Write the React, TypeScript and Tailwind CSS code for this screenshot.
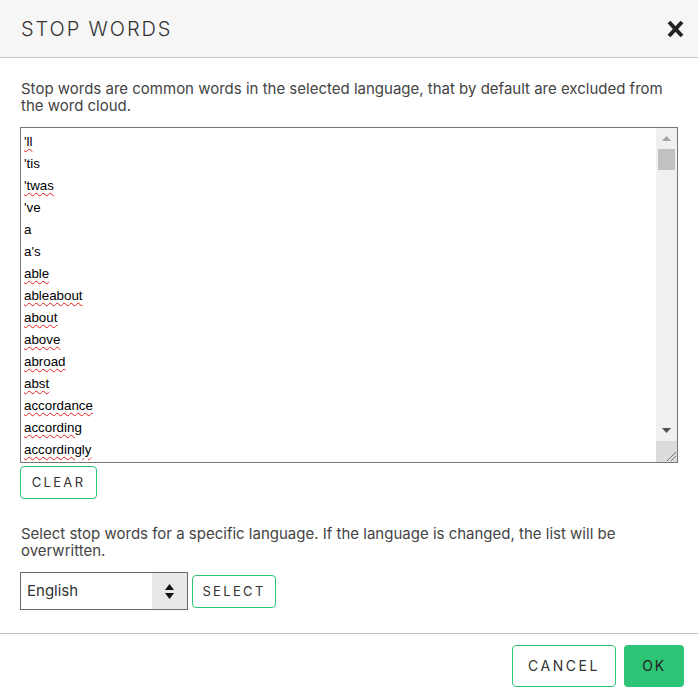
import React from 'react';

const words: { w: string; err: boolean }[] = [
  { w: "'ll", err: true },
  { w: "'tis", err: false },
  { w: "'twas", err: true },
  { w: "'ve", err: false },
  { w: 'a', err: false },
  { w: "a's", err: false },
  { w: 'able', err: true },
  { w: 'ableabout', err: true },
  { w: 'about', err: true },
  { w: 'above', err: true },
  { w: 'abroad', err: true },
  { w: 'abst', err: true },
  { w: 'accordance', err: true },
  { w: 'according', err: true },
  { w: 'accordingly', err: true },
];

function GreenButton({ children, className = '' }: { children: React.ReactNode; className?: string }) {
  return (
    <button
      className={`border border-[#2ec476] rounded-[4px] bg-white text-[#333] text-[13px] leading-none tracking-[0.18em] font-['Inter',sans-serif] ${className}`}
    >
      {children}
    </button>
  );
}

export default function App() {
  return (
    <div className="w-[698px] h-[694px] bg-white flex flex-col font-['Inter',sans-serif] text-[#333]">
      {/* Header */}
      <div className="h-[58px] bg-[#f6f6f6] border-b border-[#c8c8c8] flex items-center justify-between pl-[21px] pr-[14px]">
        <h1 className="text-[20px] font-light tracking-[0.095em] text-[#333]">STOP WORDS</h1>
        <svg width="17" height="18" viewBox="0 0 17 18" className="mt-[1px]">
          <path d="M2 2 L15 16 M15 2 L2 16" stroke="#222" strokeWidth="4" strokeLinecap="butt" />
        </svg>
      </div>

      {/* Body */}
      <div className="flex-1 px-[20px] pt-[22px]">
        <p className="text-[15px] leading-[17px] text-[#444] pl-[1px]">
          Stop words are common words in the selected language, that by default are excluded from the word cloud.
        </p>

        <div className="mt-[13px] h-[336px] border border-[#767676] flex overflow-hidden">
          <div className="flex-1 pt-[3px] pl-[3px] overflow-hidden font-['Liberation_Sans',Arial,sans-serif] text-[13.33px] text-black">
            {words.map((x) => (
              <div key={x.w} className="h-[22px] leading-[22px]">
                <span
                  className={
                    x.err ? 'underline decoration-wavy decoration-[#e02020] decoration-1 underline-offset-[2px]' : ''
                  }
                >
                  {x.w}
                </span>
              </div>
            ))}
          </div>
          {/* scrollbar */}
          <div className="w-[21px] flex flex-col">
            <div className="flex-1 bg-[#f0f0f0] flex flex-col items-center">
              <div className="h-[21px] w-full flex items-center justify-center">
                <svg width="9" height="5" viewBox="0 0 9 5">
                  <path d="M4.5 0 L9 5 L0 5 Z" fill="#a3a3a3" />
                </svg>
              </div>
              <div className="w-[17px] h-[21px] bg-[#c1c1c1]" />
              <div className="flex-1" />
              <div className="h-[21px] w-full flex items-center justify-center">
                <svg width="9" height="5" viewBox="0 0 9 5">
                  <path d="M0 0 L9 0 L4.5 5 Z" fill="#505050" />
                </svg>
              </div>
            </div>
            <div className="h-[21px] bg-[#dcdcdc] flex items-end justify-end">
              <svg width="12" height="12" viewBox="0 0 12 12">
                <path d="M2 11 L11 2 M6 11 L11 6" stroke="#777" strokeWidth="1" />
              </svg>
            </div>
          </div>
        </div>

        <GreenButton className="mt-[3px] w-[77px] h-[33px]">CLEAR</GreenButton>

        <p className="mt-[26px] text-[15px] leading-[17px] text-[#444] pl-[1px]">
          Select stop words for a specific language. If the language is changed, the list will be overwritten.
        </p>

        <div className="mt-[13px] flex items-center gap-[4px]">
          <div className="w-[168px] h-[38px] border border-[#6b6b6b] flex">
            <div className="flex-1 flex items-center pl-[6px] text-[15px] text-[#333]">English</div>
            <div className="w-[35px] bg-[#e8e8e8] flex flex-col items-center justify-center gap-[3px]">
              <svg width="9" height="6" viewBox="0 0 9 6">
                <path d="M4.5 0 L9 6 L0 6 Z" fill="#111" />
              </svg>
              <svg width="9" height="6" viewBox="0 0 9 6">
                <path d="M0 0 L9 0 L4.5 6 Z" fill="#111" />
              </svg>
            </div>
          </div>
          <GreenButton className="w-[84px] h-[33px]">SELECT</GreenButton>
        </div>
      </div>

      {/* Footer */}
      <div className="h-[61px] border-t border-[#c0c0c0] flex items-start justify-end gap-[8px] pt-[11px] pr-[14px]">
        <GreenButton className="w-[104px] h-[42px] text-[14px]">CANCEL</GreenButton>
        <button className="w-[60px] h-[42px] rounded-[4px] bg-[#2ec476] text-[#222] text-[14px] leading-none tracking-[0.12em] font-['Inter',sans-serif]">
          OK
        </button>
      </div>
    </div>
  );
}
